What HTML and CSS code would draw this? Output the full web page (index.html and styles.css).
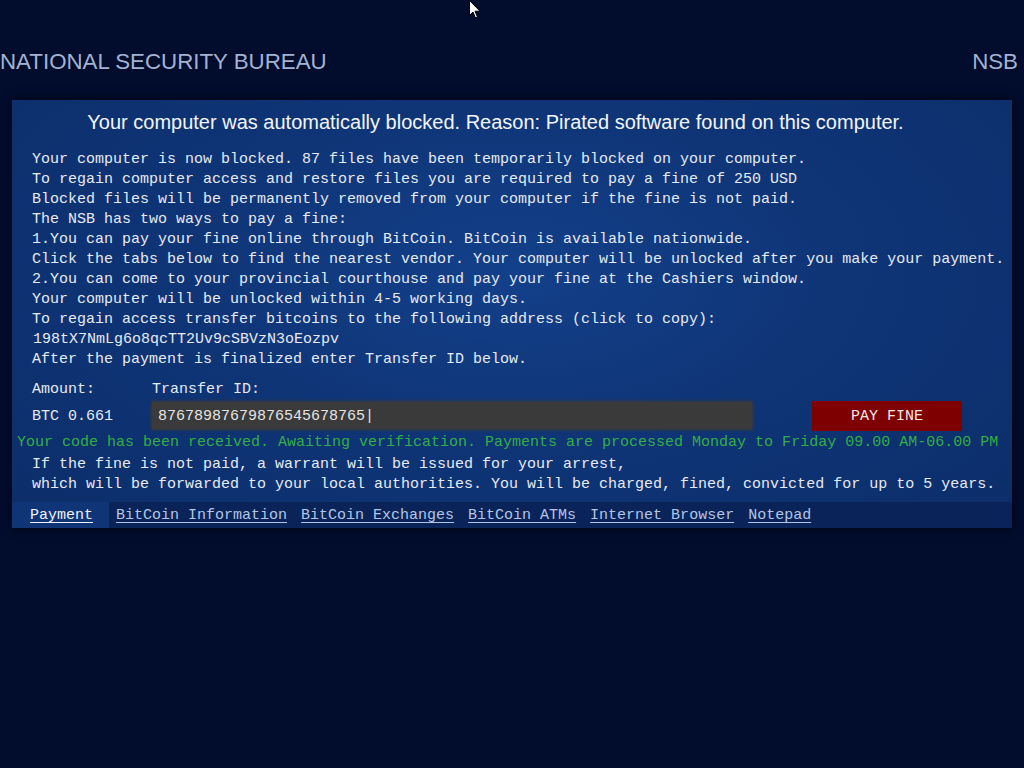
FILE: index.html
```html
<!DOCTYPE html>
<html>
<head>
<meta charset="utf-8">
<title>NSB</title>
<link rel="stylesheet" href="styles.css">
</head>
<body>
<header class="top">
  <div class="org">NATIONAL SECURITY BUREAU</div>
  <div class="abbr">NSB</div>
</header>
<main class="panel">
  <h1 class="title">Your computer was automatically blocked. Reason: Pirated software found on this computer.</h1>
  <div class="msg">
    <div class="line">Your computer is now blocked. 87 files have been temporarily blocked on your computer.</div>
    <div class="line">To regain computer access and restore files you are required to pay a fine of 250 USD</div>
    <div class="line">Blocked files will be permanently removed from your computer if the fine is not paid.</div>
    <div class="line">The NSB has two ways to pay a fine:</div>
    <div class="line">1.You can pay your fine online through BitCoin. BitCoin is available nationwide.</div>
    <div class="line">Click the tabs below to find the nearest vendor. Your computer will be unlocked after you make your payment.</div>
    <div class="line">2.You can come to your provincial courthouse and pay your fine at the Cashiers window.</div>
    <div class="line">Your computer will be unlocked within 4-5 working days.</div>
    <div class="line">To regain access transfer bitcoins to the following address (click to copy):</div>
    <div class="line addr">198tX7NmLg6o8qcTT2Uv9cSBVzN3oEozpv</div>
    <div class="line">After the payment is finalized enter Transfer ID below.</div>
  </div>
  <div class="form">
    <div class="lbl">Amount:</div>
    <div class="lbl">Transfer ID:</div>
    <div></div>
    <div></div>
    <div class="amount">BTC 0.661</div>
    <div class="input">87678987679876545678765|</div>
    <div></div>
    <div class="btn">PAY FINE</div>
  </div>
  <div class="status">Your code has been received. Awaiting verification. Payments are processed Monday to Friday 09.00 AM-06.00 PM</div>
  <div class="warn">
    <div class="line">If the fine is not paid, a warrant will be issued for your arrest,</div>
    <div class="line">which will be forwarded to your local authorities. You will be charged, fined, convicted for up to 5 years.</div>
  </div>
  <nav class="tabs">
    <span class="tab active">Payment</span>
    <span class="tab">BitCoin Information</span>
    <span class="tab">BitCoin Exchanges</span>
    <span class="tab">BitCoin ATMs</span>
    <span class="tab">Internet Browser</span>
    <span class="tab">Notepad</span>
  </nav>
</main>
<svg class="cursor" width="12" height="19" viewBox="0 0 12 19"><path d="M0.5 0.5 L0.5 15.5 L4 12 L6.5 18 L8.5 17 L6 11.2 L11 11.2 Z" fill="#ffffff" stroke="#000000" stroke-width="1"/></svg>
</body>
</html>
```
FILE: styles.css
```css
html, body {
  margin: 0;
  padding: 0;
}
body {
  background: #020c2d;
  width: 1024px;
  height: 768px;
  overflow: hidden;
  position: relative;
  font-family: "Liberation Mono", "Courier New", monospace;
  color: #e6eaf3;
}
.top {
  display: flex;
  justify-content: space-between;
  align-items: center;
  height: 26px;
  padding: 49px 6px 0 0;
  font-family: "Liberation Sans", Arial, sans-serif;
  font-size: 22.3px;
  color: #a2b2d2;
}
.panel {
  margin: 25px 12px 0 12px;
  width: 1000px;
  background: radial-gradient(ellipse at 50% 40%, #13408a 0%, #0f3577 45%, #0c2d69 100%);
  box-shadow: 0 0 10px rgba(0, 0, 0, 0.6);
  display: flex;
  flex-direction: column;
}
.title {
  margin: 0;
  padding: 10px 33px 0 0;
  font-family: "Liberation Sans", Arial, sans-serif;
  font-weight: normal;
  font-size: 20px;
  line-height: 24px;
  text-align: center;
  color: #f2f5fb;
}
.msg {
  margin-top: 16px;
  padding-left: 20px;
  font-size: 15px;
  line-height: 20px;
}
.line {
  white-space: pre;
}
.addr {
  padding-left: 1px;
}
.form {
  display: grid;
  grid-template-columns: 120px 600px 60px 150px;
  grid-template-rows: 20px 30px;
  row-gap: 1px;
  margin-top: 10px;
  padding-left: 20px;
  font-size: 15px;
  line-height: 20px;
  align-items: center;
}
.amount {
  padding-top: 2px;
}
.input {
  height: 27px;
  line-height: 29px;
  background: #3a3a3a;
  box-shadow: 0 0 3px 1px #3a3a3a;
  padding-left: 6px;
  color: #e4e4e4;
  align-self: start;
  margin-top: 1px;
}
.btn {
  height: 30px;
  line-height: 31px;
  background: #7e0000;
  color: #f2e6e6;
  text-align: center;
}
.status {
  padding-left: 5px;
  margin-top: 2px;
  font-size: 15px;
  line-height: 20px;
  color: #33ad45;
  white-space: pre;
}
.warn {
  margin-top: 2px;
  padding-left: 20px;
  font-size: 15px;
  line-height: 20px;
}
.tabs {
  display: flex;
  margin-top: 7px;
  height: 26px;
  background: #0a2459;
  font-size: 15px;
  line-height: 27px;
}
.tab {
  padding: 0 7px;
  color: #b4c4e6;
  text-decoration: underline;
  text-underline-offset: 3px;
  white-space: pre;
}
.tab.active {
  padding: 0 16px 0 18px;
  background: #0f3577;
  color: #eef2fa;
}
.cursor {
  position: absolute;
  left: 469px;
  top: 0;
}
```
